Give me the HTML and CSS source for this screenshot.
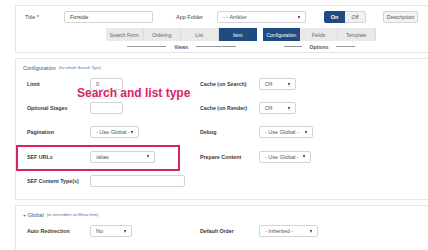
FILE: index.html
```html
<!DOCTYPE html>
<html lang="en">
<head>
  <meta charset="UTF-8">
  <title>Search Type</title>
  <link rel="stylesheet" href="styles.css">
</head>
<body>
  <div class="panel top-panel">
    <div class="title-row">
      <span class="lbl title-lbl">Title *</span>
      <div class="input title-input">Forside</div>
      <span class="lbl folder-lbl">App Folder</span>
      <div class="select folder-select">- - Artikler<span class="arrow"></span></div>
      <div class="toggle">
        <span class="tbtn on">On</span>
        <span class="tbtn off">Off</span>
      </div>
      <span class="btn desc">Description</span>
    </div>

    <div class="tab-row">
      <div class="tab-group views">
        <div class="tabs">
          <span class="tab">Search Form</span>
          <span class="tab">Ordering</span>
          <span class="tab">List</span>
          <span class="tab active">Item</span>
        </div>
        <div class="group-caption"><i></i><span>Views</span><i></i></div>
      </div>
      <div class="tab-group options">
        <div class="tabs">
          <span class="tab active">Configuration</span>
          <span class="tab">Fields</span>
          <span class="tab">Template</span>
        </div>
        <div class="group-caption"><i></i><span>Options</span><i></i></div>
      </div>
    </div>
  </div>

  <div class="panel config-panel">
    <div class="panel-head"><span class="head-title">Configuration</span> <em>(for whole Search Type)</em></div>
    <div class="form-grid">
      <div class="row">
        <span class="lbl">Limit</span>
        <div class="cell"><div class="input small">0</div></div>
        <span class="lbl">Cache (on Search)</span>
        <div class="cell"><div class="select s-off">Off<span class="arrow"></span></div></div>
      </div>
      <div class="row">
        <span class="lbl">Optional Stages</span>
        <div class="cell"><div class="input small"></div></div>
        <span class="lbl">Cache (on Render)</span>
        <div class="cell"><div class="select s-off">Off<span class="arrow"></span></div></div>
      </div>
      <div class="row">
        <span class="lbl">Pagination</span>
        <div class="cell"><div class="select s-global">- Use Global -<span class="arrow"></span></div></div>
        <span class="lbl">Debug</span>
        <div class="cell"><div class="select s-global2">- Use Global -<span class="arrow"></span></div></div>
      </div>
      <div class="row sef-row">
        <span class="lbl">SEF URLs</span>
        <div class="cell"><div class="select s-alias">/alias<span class="arrow"></span></div></div>
        <span class="lbl">Prepare Content</span>
        <div class="cell"><div class="select s-global3">- Use Global -<span class="arrow"></span></div></div>
        <div class="highlight"></div>
      </div>
      <div class="row">
        <span class="lbl">SEF Content Type(s)</span>
        <div class="cell wide"><div class="input long"></div></div>
      </div>
    </div>
    <div class="callout">Search and list type</div>
  </div>

  <div class="panel global-panel">
    <div class="panel-head"><span class="head-title">+ Global</span> <em>(or overridden on Menu Item)</em></div>
    <div class="form-grid">
      <div class="row">
        <span class="lbl">Auto Redirection</span>
        <div class="cell"><div class="select s-no">No<span class="arrow"></span></div></div>
        <span class="lbl">Default Order</span>
        <div class="cell"><div class="select s-inherit">- Inherited -<span class="arrow"></span></div></div>
      </div>
    </div>
  </div>
</body>
</html>
```

FILE: styles.css
```css
html {
  overflow: hidden;
}

body {
  margin: 0;
  padding: 5px 0 0 15px;
  background-color: #fff;
  font-family: "Liberation Sans", Arial, sans-serif;
  font-size: 6px;
  color: #333;
  width: 413px;
  height: 245px;
  overflow: hidden;
  white-space: nowrap;
}

.panel {
  border: 1px solid #e6e6e6;
  border-right: none;
  position: relative;
  margin-right: -20px;
}

.lbl {
  font-weight: bold;
  color: #3a3a3a;
  font-size: 5.3px;
}

.input, .select {
  box-sizing: border-box;
  height: 12px;
  border: 1px solid #d4d4d4;
  border-radius: 2px;
  background: #fff;
  font-size: 5.5px;
  color: #555;
  padding: 0 5px;
  display: flex;
  align-items: center;
}

.select {
  justify-content: space-between;
}

.arrow {
  width: 0;
  height: 0;
  border-left: 1.5px solid transparent;
  border-right: 1.5px solid transparent;
  border-top: 3px solid #222;
}

/* top panel */
.top-panel {
  height: 46px;
}

.title-row {
  display: flex;
  align-items: center;
  margin-top: 5px;
  height: 12px;
}

.title-lbl {
  width: 39px;
  margin-left: 9px;
  font-weight: normal;
  font-size: 5.5px;
  color: #444;
}

.title-input {
  width: 89px;
  color: #333;
}

.folder-lbl {
  margin-left: 23px;
  width: 41px;
  font-weight: normal;
  font-size: 5.5px;
  color: #444;
}

.folder-select {
  width: 89px;
}

.toggle {
  display: flex;
  margin-left: 18px;
  height: 12px;
}

.tbtn {
  width: 21px;
  display: flex;
  align-items: center;
  justify-content: center;
  font-size: 5.5px;
  font-weight: bold;
}

.tbtn.on {
  background: #1e4c80;
  color: #fff;
  border-radius: 2px 0 0 2px;
}

.tbtn.off {
  background: #f1f1f1;
  border: 1px solid #d4d4d4;
  border-left: none;
  box-sizing: border-box;
  color: #555;
  font-weight: normal;
  border-radius: 0 2px 2px 0;
}

.btn.desc {
  margin-left: 17px;
  width: 35px;
  height: 12px;
  box-sizing: border-box;
  border: 1px solid #d4d4d4;
  background: #f3f3f3;
  border-radius: 2px;
  display: flex;
  align-items: center;
  justify-content: center;
  color: #555;
  font-size: 5.5px;
}

.tab-row {
  display: flex;
  margin-top: 5px;
  margin-left: 90px;
}

.tab-group {
  display: flex;
  flex-direction: column;
}

.options {
  margin-left: 6px;
}

.tabs {
  display: flex;
  height: 13px;
  background: #e9e9e9;
}

.tab {
  display: flex;
  align-items: center;
  justify-content: center;
  font-size: 5px;
  color: #666;
  border-right: 1px solid #dcdcdc;
  box-sizing: border-box;
}

.views .tab { width: 37.5px; }
.options .tab { width: 37.7px; }

.tab.active {
  background: #1e4c80;
  color: #fff;
  border-right: none;
}

.views .tab.active { margin-left: 0.5px; }

.group-caption {
  display: flex;
  align-items: center;
  gap: 8px;
  padding: 0 21px;
  height: 11px;
  font-size: 5px;
  color: #555;
  font-weight: bold;
}

.group-caption i {
  flex: 1;
  height: 1px;
  background: #999;
}

/* config panel */
.config-panel {
  margin-top: 5px;
  height: 140px;
}

.panel-head {
  margin: 4px 0 0 7px;
  height: 9px;
  display: flex;
  align-items: center;
  gap: 3px;
}

.head-title {
  color: #2b5c96;
  font-size: 5.5px;
}

.panel-head em {
  color: #4a6fa5;
  font-size: 4px;
}

.row {
  display: grid;
  grid-template-columns: 63px 110px 59px 1fr;
  align-items: center;
  height: 24px;
  padding-left: 11px;
  position: relative;
}

.cell {
  display: flex;
}

.small { width: 33px; }
.long { width: 95px; }
.s-off { width: 37px; }
.s-global { width: 49px; }
.s-global2 { width: 54px; }
.s-global3 { width: 52px; }
.s-alias { width: 65px; }
.s-no { width: 42px; }
.s-inherit { width: 59px; }

.sef-row {
  height: 25px;
}

.highlight {
  position: absolute;
  left: 0;
  top: 1px;
  width: 164px;
  height: 26px;
  box-sizing: border-box;
  border: 2px solid #d6236a;
}

.callout {
  position: absolute;
  left: 61px;
  top: 27px;
  font-size: 12px;
  font-weight: bold;
  color: #d8246c;
  text-shadow: 1px 1px 0 #fff, -1px -1px 0 #fff, 1px 1px 2px rgba(0, 0, 0, 0.25);
}

/* global panel */
.global-panel {
  margin-top: 5px;
  height: 60px;
}
```
